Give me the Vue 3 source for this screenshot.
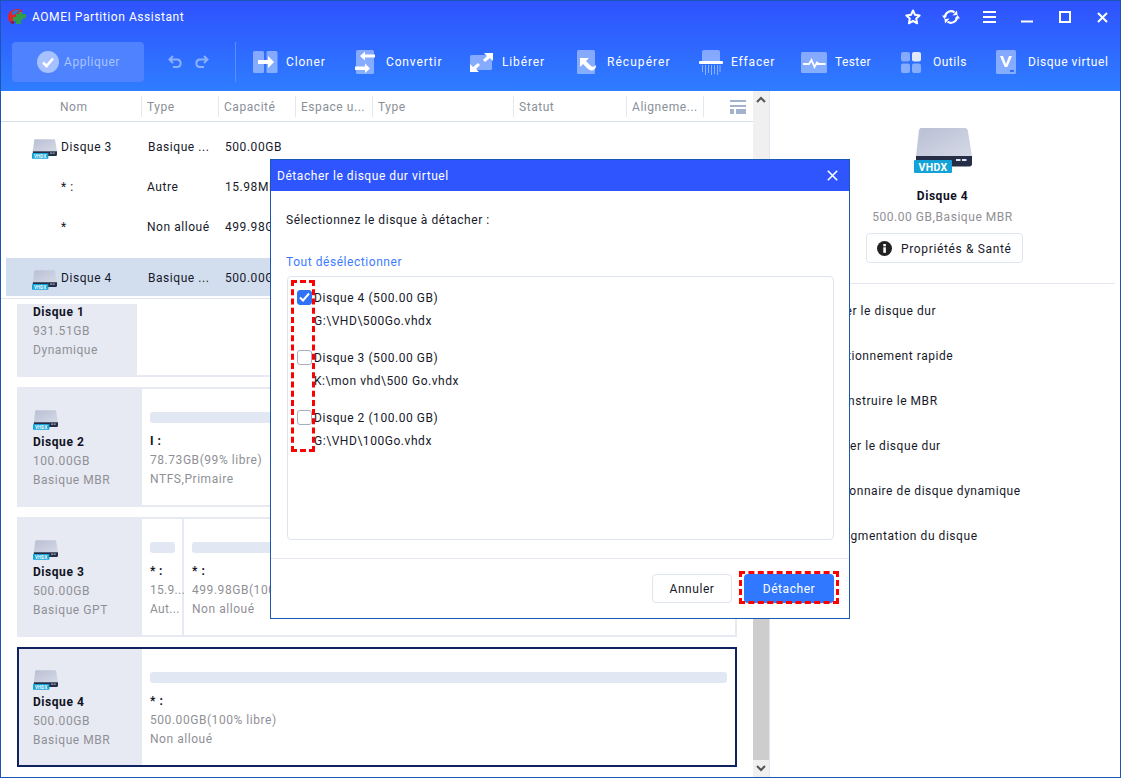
<script setup>
const cols = [
  { label: 'Nom', w: 141, cls: 'first' },
  { label: 'Type', w: 77 },
  { label: 'Capacité', w: 77 },
  { label: 'Espace u...', w: 77 },
  { label: 'Type', w: 141 },
  { label: 'Statut', w: 113 },
  { label: 'Aligneme...', w: 77 }
]
const rows = [
  { name: 'Disque 3', type: 'Basique ...', cap: '500.00GB', disk: true },
  { name: '* :', type: 'Autre', cap: '15.98MB' },
  { name: '*', type: 'Non alloué', cap: '499.98GB' },
  { name: 'Disque 4', type: 'Basique ...', cap: '500.00GB', disk: true, selected: true }
]
const menu = [
  'Copier le disque dur',
  'Partitionnement rapide',
  'Reconstruire le MBR',
  'Vérifier le disque dur',
  'Gestionnaire de disque dynamique',
  'Défragmentation du disque'
]
const disks = [
  { name: 'Disque 4 (500.00 GB)', path: 'G:\\VHD\\500Go.vhdx', on: true },
  { name: 'Disque 3 (500.00 GB)', path: 'K:\\mon vhd\\500 Go.vhdx', on: false },
  { name: 'Disque 2 (100.00 GB)', path: 'G:\\VHD\\100Go.vhdx', on: false }
]
const tools = [
  { id: 'cloner', label: 'Cloner', gap: 8, w: 102, ls: 0.85 },
  { id: 'convertir', label: 'Convertir', gap: 11, w: 115, ls: 0.85 },
  { id: 'liberer', label: 'Libérer', gap: 9, w: 107, ls: 0.85 },
  { id: 'recuperer', label: 'Récupérer', gap: 9, w: 122, ls: 1.05 },
  { id: 'effacer', label: 'Effacer', gap: 8, w: 102, ls: 0.85 },
  { id: 'tester', label: 'Tester', gap: 8, w: 100, ls: 0.4 },
  { id: 'outils', label: 'Outils', gap: 12, w: 95, ls: 0.5 },
  { id: 'virtuel', label: 'Disque virtuel', gap: 12, w: 120, ls: 0.55 }
]
</script>

<template>
  <div class="app">
    <svg class="defs" width="0" height="0" aria-hidden="true">
      <defs>
        <linearGradient id="diskTop" x1="0" y1="0" x2="1" y2="1">
          <stop offset="0" stop-color="#b9c0d4" />
          <stop offset="1" stop-color="#d5d9e6" />
        </linearGradient>
      </defs>
      <symbol id="disk" viewBox="0 0 58 45">
        <path d="M7 0h44c1.500 0 2.500 1 2.800 2.500L58 28H2L5 2.500C5.200 1 6 0 7 0z" fill="url(#diskTop)" />
        <path d="M2 28h56v8c0 1.500-1 2.500-2.500 2.500H4C2.500 38.500 2 37.500 2 36z" fill="#262e47" />
        <rect x="42" y="31" width="4.500" height="2" fill="#dfe4ef" />
        <rect x="48" y="31" width="4.500" height="2" fill="#dfe4ef" />
        <rect x="0" y="32" width="38" height="13" rx="1" fill="#13a3d8" />
        <text x="19" y="43" text-anchor="middle" class="vhdx">VHDX</text>
      </symbol>
    </svg>

    <header class="header">
      <div class="titlebar">
        <svg class="logo" viewBox="0 0 20 17">
          <path d="M1 8C1 3 5 0 10 0c2 0 4 .6 5.500 1.800L10 7 7 12 3 13C1.500 12 1 10 1 8z" fill="#d8262c" />
          <path d="M5 3c2-2 5-2.500 8-1.500L9 5 5 6z" fill="#3a6fc8" />
          <path d="M9 5h3V3h3v2h4v4h-3v2h-2v4H9v-3H6V8h3z" fill="#2f9e4a" />
          <path d="M3 13l4-1v3c-2 0-3-1-4-2z" fill="#8e1a22" />
        </svg>
        <span class="app-title">AOMEI Partition Assistant</span>
        <div class="win-icons">
          <svg class="wi star" viewBox="0 0 16 16"><path d="M8 1.500l2 4.300 4.600.6-3.400 3.200.9 4.700L8 11.900l-4.100 2.400.9-4.700L1.400 6.400 6 5.800z" fill="none" stroke="#fff" stroke-width="2" stroke-linejoin="round" /></svg>
          <svg class="wi sync" viewBox="0 0 18 16"><path d="M3 8a6 6 0 0 1 9.500-4.600M15 8a6 6 0 0 1-9.500 4.600" fill="none" stroke="#fff" stroke-width="2.200" /><path d="M10.500 6.500l5-.5L15 1.500zM7.500 9.500l-5 .5.5 4.500zM0 6.500h5L2.500 10zM18 9.500h-5L15.500 6z" fill="#fff" /></svg>
          <svg class="wi menu" viewBox="0 0 13 12"><path d="M0 1h13M0 6h13M0 11h13" stroke="#fff" stroke-width="2" /></svg>
          <svg class="wi min" viewBox="0 0 12 12"><path d="M0 10.500h12" stroke="#fff" stroke-width="2" /></svg>
          <svg class="wi max" viewBox="0 0 12 12"><rect x="1" y="1" width="10" height="10" fill="none" stroke="#fff" stroke-width="2" /></svg>
          <svg class="wi close" viewBox="0 0 11 11"><path d="M1 1l9 9M10 1l-9 9" stroke="#fff" stroke-width="2" /></svg>
        </div>
      </div>
      <div class="toolbar">
        <button class="apply">
          <svg class="apply-icon" viewBox="0 0 22 22"><circle cx="11" cy="11" r="11" fill="#fff" fill-opacity=".5" /><path d="M6 11.500l3.500 3.500L16 7.500" fill="none" stroke="#fff" stroke-width="2.600" /></svg>
          <span>Appliquer</span>
        </button>
        <div class="undo">
          <svg class="ur" viewBox="0 0 15 14"><path d="M5 1L1.500 4.500 5 8M2 4.500h7.500a3.800 3.800 0 0 1 0 7.500H5" fill="none" stroke="#8ab0ff" stroke-width="2" /></svg>
          <svg class="ur" viewBox="0 0 15 14"><path d="M10 1l3.500 3.500L10 8M13 4.500H5.500a3.800 3.800 0 0 0 0 7.500H10" fill="none" stroke="#8ab0ff" stroke-width="2" /></svg>
        </div>
        <div class="tb-divider"></div>
        <div class="tools">
          <div v-for="t in tools" :key="t.id" class="tool" :style="{ gap: t.gap + 'px', width: t.w + 'px', letterSpacing: t.ls + 'px' }">
            <svg v-if="t.id === 'cloner'" class="ti" width="25" height="22" viewBox="0 0 25 22">
              <rect x="0" y="0" width="11" height="22" rx="1.500" fill="#fff" fill-opacity=".42" />
              <rect x="13.500" y="0" width="11" height="22" rx="1.500" fill="#fff" fill-opacity=".42" />
              <path d="M5 9h10V5l6 6-6 6v-4H5z" fill="#fff" />
            </svg>
            <svg v-else-if="t.id === 'convertir'" class="ti" width="20" height="24" viewBox="0 0 20 24">
              <rect x="1" y="0" width="18" height="24" rx="1.500" fill="#fff" fill-opacity=".42" />
              <path d="M20 4.500h-10V1.500L5 6l5 4.500V7.500h10zM0 16.500h10v-3l5 5-5 4.500v-3H0z" fill="#fff" />
            </svg>
            <svg v-else-if="t.id === 'liberer'" class="ti" width="23" height="19" viewBox="0 0 23 19">
              <rect x="0" y="2" width="22" height="15" rx="1.500" fill="#fff" fill-opacity=".42" />
              <path d="M14 0h9v8l-3-3-5 4-2-2 4-4zM9 19H0v-8l3 3 5-4 2 2-4 4z" fill="#fff" />
            </svg>
            <svg v-else-if="t.id === 'recuperer'" class="ti" width="21" height="24" viewBox="0 0 21 24">
              <rect x="0" y="0" width="18" height="24" rx="1.500" fill="#fff" fill-opacity=".42" />
              <path d="M3 8h9l-3 3 5 5c1.500 1.200 3 1 5-1 .5 3-2 5.500-4.500 5.500-2 0-3-1-4.500-2.500l-4-4-3 3z" fill="#fff" />
            </svg>
            <svg v-else-if="t.id === 'effacer'" class="ti" width="24" height="25" viewBox="0 0 24 25">
              <path d="M3 2a2 2 0 0 1 2-2h14a2 2 0 0 1 2 2v9H3z" fill="#fff" fill-opacity=".42" />
              <rect x="0" y="11" width="24" height="3" rx="1" fill="#fff" />
              <path d="M3 15h1v7H3zM6 15h1v10H6zM9 15h1v8H9zM12 15h1v10h-1zM15 15h1v9h-1zM18 15h1v10h-1zM20.500 15h1v7h-1z" fill="#fff" fill-opacity=".45" />
            </svg>
            <svg v-else-if="t.id === 'tester'" class="ti" width="26" height="21" viewBox="0 0 26 21">
              <rect x="0" y="0" width="26" height="21" rx="1.500" fill="#fff" fill-opacity=".42" />
              <path d="M2 12h6l2.500-4 3 7 2.500-4.500 1.500 1.500h7" fill="none" stroke="#fff" stroke-width="1.800" />
            </svg>
            <svg v-else-if="t.id === 'outils'" class="ti" width="20" height="21" viewBox="0 0 20 21">
              <rect x="0" y="0" width="9" height="9.500" rx="2" fill="#fff" fill-opacity=".42" />
              <rect x="11" y="0" width="9" height="9.500" rx="2" fill="#fff" fill-opacity=".85" />
              <rect x="0" y="11.500" width="9" height="9.500" rx="2" fill="#fff" fill-opacity=".42" />
              <rect x="11" y="11.500" width="9" height="9.500" rx="2" fill="#fff" fill-opacity=".42" />
            </svg>
            <svg v-else class="ti" width="20" height="24" viewBox="0 0 20 24">
              <rect x="0" y="0" width="20" height="24" rx="1.500" fill="#fff" fill-opacity=".42" />
              <path d="M4 6h3l3 8 3-8h3l-4.700 11h-2.600z" fill="#fff" />
              <rect x="14" y="20" width="4" height="2" fill="#2f6dff" />
            </svg>
            <span>{{ t.label }}</span>
          </div>
        </div>
      </div>
    </header>

    <main class="body">
      <section class="left">
        <div class="thead">
          <div v-for="(c, i) in cols" :key="i" class="th" :class="c.cls" :style="{ width: c.w + 'px' }">{{ c.label }}</div>
          <div class="th-end">
            <svg width="16" height="14" viewBox="0 0 16 14">
              <path d="M0 0h16v2H0zM0 5h16v2H0zM0 9h4v5H0zM6 9h10v5H6z" fill="#a3b3cb" />
            </svg>
          </div>
        </div>
        <div class="tbody">
          <div v-for="(r, i) in rows" :key="i" class="tr" :class="{ selected: r.selected, sub: !r.disk }">
            <div class="td-name">
              <svg v-if="r.disk" class="row-disk"><use href="#disk" /></svg>
              <span>{{ r.name }}</span>
            </div>
            <div class="td-type">{{ r.type }}</div>
            <div class="td-cap">{{ r.cap }}</div>
          </div>
        </div>
        <div class="cards">
          <div class="card card-clip">
            <div class="side side-narrow">
              <svg class="card-disk"><use href="#disk" /></svg>
              <strong>Disque 1</strong>
              <span>931.51GB</span>
              <span>Dynamique</span>
            </div>
          </div>
          <div class="card">
            <div class="side">
              <svg class="card-disk"><use href="#disk" /></svg>
              <strong>Disque 2</strong>
              <span>100.00GB</span>
              <span>Basique MBR</span>
            </div>
            <div class="part grow">
              <div class="bar"></div>
              <strong>I :</strong>
              <span>78.73GB(99% libre)</span>
              <span>NTFS,Primaire</span>
            </div>
          </div>
          <div class="card">
            <div class="side">
              <svg class="card-disk"><use href="#disk" /></svg>
              <strong>Disque 3</strong>
              <span>500.00GB</span>
              <span>Basique GPT</span>
            </div>
            <div class="part small">
              <div class="bar"></div>
              <strong>* :</strong>
              <span>15.9...</span>
              <span>Aut...</span>
            </div>
            <div class="part grow">
              <div class="bar"></div>
              <strong>* :</strong>
              <span>499.98GB(100% libre)</span>
              <span>Non alloué</span>
            </div>
          </div>
          <div class="card active">
            <div class="side">
              <svg class="card-disk"><use href="#disk" /></svg>
              <strong>Disque 4</strong>
              <span>500.00GB</span>
              <span>Basique MBR</span>
            </div>
            <div class="part grow">
              <div class="bar"></div>
              <strong>* :</strong>
              <span>500.00GB(100% libre)</span>
              <span>Non alloué</span>
            </div>
          </div>
        </div>
      </section>

      <div class="scrollbar">
        <div class="sb-btn">
          <svg width="10" height="7" viewBox="0 0 10 7"><path d="M1 6l4-4 4 4" fill="none" stroke="#555" stroke-width="2" /></svg>
        </div>
        <div class="sb-track"><div class="sb-thumb"></div></div>
        <div class="sb-btn">
          <svg width="10" height="7" viewBox="0 0 10 7"><path d="M1 1l4 4 4-4" fill="none" stroke="#555" stroke-width="2" /></svg>
        </div>
      </div>

      <aside class="right">
        <div class="info">
          <svg class="big-disk"><use href="#disk" /></svg>
          <strong>Disque 4</strong>
          <span class="info-sub">500.00 GB,Basique MBR</span>
          <button class="props">
            <svg width="15" height="15" viewBox="0 0 15 15"><circle cx="7.500" cy="7.500" r="7.500" fill="#222" /><rect x="6.300" y="6.300" width="2.600" height="5.500" fill="#fff" /><rect x="6.300" y="3" width="2.600" height="2.300" fill="#fff" /></svg>
            <span class="props-label">Propriétés &amp; Santé</span>
          </button>
        </div>
        <ul class="menu-list">
          <li v-for="m in menu" :key="m">{{ m }}</li>
        </ul>
      </aside>
    </main>

    <div class="dialog">
      <div class="dlg-title">
        <span>Détacher le disque dur virtuel</span>
        <svg width="11" height="11" viewBox="0 0 11 11"><path d="M.8.8l9.400 9.400M10.200.8L.8 10.200" stroke="#fff" stroke-width="1.600" /></svg>
      </div>
      <div class="dlg-body">
        <p class="dlg-lead">Sélectionnez le disque à détacher :</p>
        <a class="dlg-link">Tout désélectionner</a>
        <div class="dlg-list">
          <div v-for="d in disks" :key="d.name" class="dlg-item">
            <div class="dlg-check-row">
              <span class="cb" :class="{ on: d.on }">
                <svg v-if="d.on" width="11" height="10" viewBox="0 0 11 10"><path d="M1 5.500l3 3L10 1.500" fill="none" stroke="#fff" stroke-width="2" /></svg>
              </span>
              <span>{{ d.name }}</span>
            </div>
            <div class="dlg-path">{{ d.path }}</div>
          </div>
        </div>
      </div>
      <div class="dlg-foot">
        <button class="btn-cancel">Annuler</button>
        <button class="btn-primary">Détacher</button>
      </div>
    </div>
    <div class="mark mark-checks"></div>
    <div class="mark mark-btn"></div>
  </div>
</template>

<style>
html, body { margin: 0; padding: 0; background: #fff; }
</style>

<style scoped>
.app {
  position: relative;
  width: 1121px;
  height: 778px;
  box-sizing: border-box;
  border: 1px solid #1a56b4;
  overflow: hidden;
  display: flex;
  flex-direction: column;
  font-family: Roboto, "Liberation Sans", sans-serif;
  font-size: 12px;
  letter-spacing: .55px;
  color: #17192a;
  background: #fff;
}
.defs { position: absolute; }
:deep(.vhdx) { font: 700 10.500px "Roboto", sans-serif; fill: #fff; letter-spacing: .4px; }
button { font: inherit; letter-spacing: inherit; color: inherit; padding: 0; }

.header {
  height: 90px;
  flex: none;
  background: linear-gradient(#2f52ff, #2e7dff);
  color: #fff;
  display: flex;
  flex-direction: column;
}
.titlebar {
  height: 32px;
  display: flex;
  align-items: center;
  padding-left: 6px;
}
.logo { width: 20px; height: 17px; margin-right: 5px; }
.app-title { font-size: 12px; }
.win-icons {
  margin-left: auto;
  display: flex;
  align-items: center;
  padding-right: 12px;
}
.wi { display: block; }
.star { width: 16px; height: 16px; }
.sync { width: 18px; height: 16px; margin-left: 21px; }
.menu { width: 13px; height: 12px; margin-left: 23px; }
.min { width: 12px; height: 12px; margin-left: 25px; }
.max { width: 12px; height: 12px; margin-left: 26px; }
.close { width: 11px; height: 11px; margin-left: 26px; }

.toolbar {
  display: flex;
  align-items: center;
  height: 40px;
  margin-top: 9px;
  padding-left: 11px;
}
.apply {
  width: 132px;
  height: 40px;
  border: none;
  border-radius: 4px;
  background: #4e82ff;
  color: #a9c5ff;
  display: flex;
  align-items: center;
  gap: 5px;
  padding-left: 25px;
  box-sizing: border-box;
}
.apply-icon { width: 22px; height: 22px; }
.undo { display: flex; gap: 11px; margin-left: 24px; }
.ur { width: 15px; height: 14px; }
.tb-divider { width: 1px; height: 40px; background: #5a8dff; margin-left: 26px; }
.tools { display: flex; align-items: center; margin-left: 17px; }
.tool { display: flex; align-items: center; white-space: nowrap; flex: none; box-sizing: border-box; }
.ti { flex: none; }

.body { flex: 1; display: flex; min-height: 0; }
.left { width: 752px; flex: none; display: flex; flex-direction: column; min-height: 0; }
.thead {
  height: 29px;
  flex: none;
  margin-top: 1px;
  display: flex;
  align-items: center;
  border-bottom: 1px solid #d9e0ec;
  box-sizing: content-box;
  color: #8a8f99;
}
.th {
  height: 21px;
  line-height: 23px;
  box-sizing: border-box;
  padding-left: 5px;
  border-right: 1px solid #e2e7f0;
  flex: none;
}
.th.first { padding-left: 59px; }
.th-end { flex: 1; display: flex; justify-content: flex-end; padding-right: 7px; }
.tbody {
  flex: none;
  height: 177px;
  box-sizing: border-box;
  padding-top: 5px;
  border-bottom: 1px solid #dfe5f0;
}
.tr {
  display: flex;
  align-items: center;
  height: 40px;
}
.tr.selected {
  margin-left: 5px;
  margin-top: 11px;
  height: 38px;
  box-sizing: border-box;
  padding-top: 2px;
  background: #d2deee;
}
.tr.selected .td-name { width: 141px; padding-left: 26px; }
.td-name {
  width: 146px;
  flex: none;
  box-sizing: border-box;
  padding-left: 31px;
  display: flex;
  align-items: center;
  gap: 4px;
}
.tr.sub .td-name { padding-left: 60px; width: 145px; }
.row-disk { width: 25px; height: 20px; flex: none; margin-top: 3px; }
.td-type { width: 78px; flex: none; padding-left: 1px; box-sizing: border-box; }
.tr.sub .td-type { width: 79px; }
.td-cap { flex: none; }
.cards {
  flex: 1;
  min-height: 0;
  overflow: hidden;
  margin-top: 5px;
  padding-left: 16px;
  display: flex;
  flex-direction: column;
  gap: 10px;
}
.card {
  width: 720px;
  height: 120px;
  flex: none;
  box-sizing: border-box;
  border: 2px solid #e7eaf2;
  display: flex;
  background: #fff;
}
.card-clip { margin-top: -47px; }
.card.active { border-color: #11235f; }
.side {
  width: 123px;
  flex: none;
  background: #e7eaf2;
  box-sizing: border-box;
  padding: 19px 0 0 14px;
  display: flex;
  flex-direction: column;
  color: #8f9096;
  line-height: 19px;
}
.side-narrow { width: 118px; }
.side strong, .part strong, .info strong { color: #10121f; font-weight: 700; }
.card-disk { width: 25px; height: 24px; margin-bottom: 1px; }
.part {
  box-sizing: border-box;
  padding: 23px 8px 0 8px;
  display: flex;
  flex-direction: column;
  color: #8f9096;
  line-height: 19px;
  white-space: nowrap;
  min-width: 0;
}
.part.small { width: 42px; border-right: 2px solid #e7eaf2; flex: none; padding-right: 0; letter-spacing: .3px; }
.part.small .bar { width: 25px; }
.part.grow { flex: 1; }
.bar { height: 11px; background: #e2e8f3; border-radius: 3px; margin-bottom: 9px; }

.scrollbar {
  width: 16px;
  flex: none;
  display: flex;
  flex-direction: column;
  background: #f0f0f0;
  border-right: 1px solid #dfe6f0;
  box-sizing: content-box;
}
.sb-btn { height: 17px; display: flex; align-items: center; justify-content: center; flex: none; }
.sb-track { flex: 1; display: flex; flex-direction: column; }
.sb-thumb { margin-top: 200px; flex: 1; background: #cdcdcd; }

.right { flex: 1; display: flex; flex-direction: column; min-width: 0; }
.info {
  height: 193px;
  flex: none;
  box-sizing: border-box;
  margin-right: 5px;
  border-bottom: 1px solid #e2e7f0;
  display: flex;
  flex-direction: column;
  align-items: center;
  padding: 37px 0 0 0;
}
.big-disk { width: 58px; height: 45px; margin-bottom: 16px; }
.info-sub { color: #8f9096; margin-top: 7px; }
.props {
  margin: 9px 0 0 4px;
  width: 157px;
  height: 30px;
  border: 1px solid #dfe5ef;
  border-radius: 4px;
  background: #fff;
  display: flex;
  align-items: center;
  gap: 9px;
  padding-left: 10px;
  box-sizing: border-box;
}
.props-label { padding-top: 1px; letter-spacing: .65px; }
.menu-list {
  list-style: none;
  margin: 0;
  padding: 5px 0 0 49px;
}
.menu-list li { height: 45px; line-height: 45px; white-space: nowrap; }

.dialog {
  position: absolute;
  left: 269px;
  top: 158px;
  width: 580px;
  height: 460px;
  box-sizing: border-box;
  border: 1px solid #1a56b4;
  background: #fff;
  display: flex;
  flex-direction: column;
}
.dlg-title {
  height: 31px;
  flex: none;
  background: #2f55ff;
  color: #fff;
  display: flex;
  align-items: center;
  justify-content: space-between;
  padding: 0 11px 0 6px;
}
.dlg-body { flex: 1; padding: 0 15px 0 15px; display: flex; flex-direction: column; }
.dlg-lead { margin: 22px 0 0; line-height: 15px; }
.dlg-link { margin-top: 27px; line-height: 15px; color: #3c7bff; }
.dlg-list {
  margin: 6px 0 0 1px;
  height: 264px;
  box-sizing: border-box;
  border: 1px solid #dfe5ef;
  border-radius: 4px;
  padding: 11px 0 0 9px;
}
.dlg-item { height: 60px; }
.dlg-check-row { display: flex; align-items: center; gap: 2px; height: 20px; }
.cb {
  width: 15px;
  height: 15px;
  margin-bottom: 2px;
  box-sizing: border-box;
  border: 1px solid #a7aebd;
  border-radius: 3px;
  flex: none;
  display: flex;
  align-items: center;
  justify-content: center;
  background: #fff;
}
.cb.on { background: #2f72f5; border-color: #2f72f5; }
.dlg-path { margin: 6px 0 0 17px; line-height: 15px; }
.dlg-foot {
  height: 60px;
  flex: none;
  border-top: 1px solid #e6e9f0;
  display: flex;
  justify-content: flex-end;
  align-items: flex-start;
  gap: 12px;
  padding: 15px 15px 0 0;
  box-sizing: border-box;
}
.btn-cancel {
  width: 80px;
  height: 29px;
  border: 1px solid #dfe5ef;
  border-radius: 4px;
  background: #fff;
}
.btn-primary {
  width: 90px;
  height: 29px;
  border: none;
  border-radius: 4px;
  background: #2f78ff;
  color: #fff;
}
.mark {
  position: absolute;
  box-sizing: border-box;
  border: 3px dashed #f00;
}
.mark-checks { left: 290px; top: 279px; width: 24px; height: 172px; }
.mark-btn { left: 738px; top: 570px; width: 100px; height: 33px; }
</style>
